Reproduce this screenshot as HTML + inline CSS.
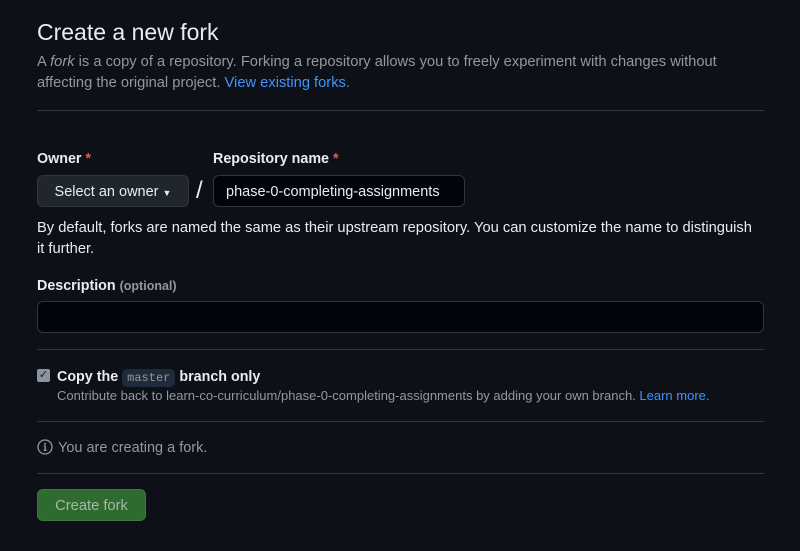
<!DOCTYPE html>
<html><head><style>
*{box-sizing:border-box;margin:0;padding:0}
body{width:800px;height:551px;background:#0d1117;color:#e6edf3;font-family:"Liberation Sans",sans-serif;position:relative;overflow:hidden}
.a{position:absolute;white-space:nowrap}
.hr{position:absolute;left:37px;width:727px;height:1px;background:#30363d}
.lbl{font-weight:bold;font-size:14.3px}
.req{color:#f85149}
.muted{color:#9198a1}
</style></head><body>
<div class="a" style="left:37px;top:19px;font-size:23px">Create a new fork</div>
<div class="a muted" style="left:37px;top:52px;font-size:14.7px;line-height:21px">A <i>fork</i> is a copy of a repository. Forking a repository allows you to freely experiment with changes without<br>affecting the original project. <span style="color:#4493f8">View existing forks.</span></div>
<div class="hr" style="top:110px"></div>
<div class="a lbl" style="left:37px;top:151px">Owner <span class="req">*</span></div>
<div class="a lbl" style="left:213px;top:151px">Repository name <span class="req">*</span></div>
<div class="a" style="left:37px;top:175px;width:152px;height:32px;background:#21262d;border:1px solid #30363d;border-radius:6px;font-size:14.5px;line-height:33px;text-align:center">Select an owner <span style="font-size:9px">▼</span></div>
<div class="a" style="left:196px;top:177px;font-size:24px;color:#e6edf3">/</div>
<div class="a" style="left:213px;top:175px;width:252px;height:32px;background:#010409;border:1px solid #30363d;border-radius:6px;font-size:14.5px;line-height:33px;padding-left:12px">phase-0-completing-assignments</div>
<div class="a" style="left:37px;top:218px;font-size:14.7px;line-height:21px;color:#e6edf3">By default, forks are named the same as their upstream repository. You can customize the name to distinguish<br>it further.</div>
<div class="a lbl" style="left:37px;top:278px">Description <span class="muted" style="font-size:12.5px">(optional)</span></div>
<div class="a" style="left:37px;top:301px;width:727px;height:32px;background:#010409;border:1px solid #30363d;border-radius:6px"></div>
<div class="hr" style="top:349px"></div>
<div class="a" style="left:37px;top:369px;width:13px;height:13px;background:#8b949e;border-radius:2px;color:#0d1117;font-size:11px;line-height:13px;text-align:center">✓</div>
<div class="a lbl" style="left:57px;top:369px">Copy the <span style="font-family:'Liberation Mono',monospace;font-weight:normal;font-size:12px;background:#1f2a3b;color:#9198a1;padding:2px 5px;border-radius:5px">master</span> branch only</div>
<div class="a muted" style="left:57px;top:388px;font-size:13px">Contribute back to learn-co-curriculum/phase-0-completing-assignments by adding your own branch. <span style="color:#4493f8">Learn more.</span></div>
<div class="hr" style="top:421px"></div>
<svg class="a" style="left:37px;top:439px" width="16" height="16" viewBox="0 0 16 16"><circle cx="8" cy="8" r="7" fill="none" stroke="#9198a1" stroke-width="1.3"/><circle cx="8" cy="4.8" r="1" fill="#9198a1"/><path d="M6.8 7h1.4v4.3M6.6 11.3h3" stroke="#9198a1" stroke-width="1.3" fill="none"/></svg>
<div class="a muted" style="left:58px;top:440px;font-size:14.5px">You are creating a fork.</div>
<div class="hr" style="top:473px"></div>
<div class="a" style="left:37px;top:489px;width:109px;height:32px;background:#2f6a31;border:1px solid #3b7a3d;border-radius:6px;color:#a4bba4;font-size:14.7px;line-height:33px;text-align:center">Create fork</div>
</body></html>
